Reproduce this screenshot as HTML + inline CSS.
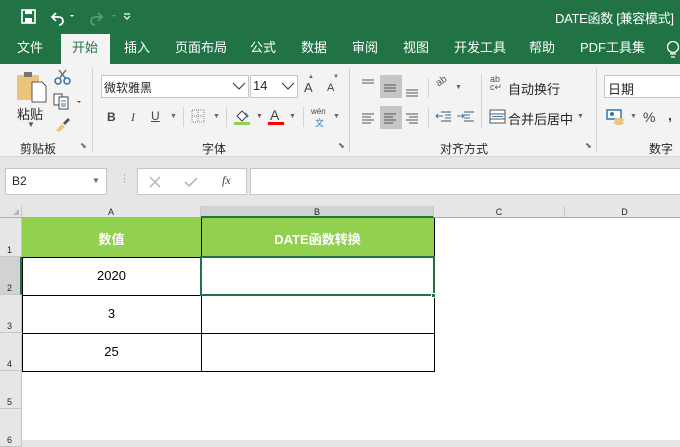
<!DOCTYPE html>
<html><head><meta charset="utf-8"><style>
*{margin:0;padding:0;box-sizing:border-box}
body{width:680px;height:440px;overflow:hidden;position:relative;background:#e6e6e6;font-family:"Liberation Sans","Noto Sans CJK SC","Microsoft YaHei",sans-serif;font-size:12px;color:#262626}
.a{position:absolute}
.t{position:absolute;white-space:nowrap}
.tab{position:absolute;top:33px;height:31px;line-height:30px;color:#fff;font-size:13px}
.sep{position:absolute;width:1px;background:#d4d4d4}
.rh{position:absolute;left:0;width:22px;background:#e6e6e6;border-bottom:1px solid #c6c6c6;border-right:1px solid #c6c6c6;font-size:9px;padding-left:7px}
.cl{position:absolute;top:206px;height:12px;background:#e6e6e6;border-right:1px solid #c6c6c6;border-bottom:1px solid #ababab;font-size:9px;text-align:center;line-height:12px}
.cell{position:absolute;text-align:center;font-size:13px;color:#000}
</style></head><body>
<div class="a" style="left:0;top:0;width:680px;height:64px;background:#217346"></div>
<svg class="a" style="left:20px;top:8px" width="120" height="18" viewBox="0 0 120 18">
<rect x="2" y="2" width="13" height="13" fill="none" stroke="#fff" stroke-width="1.6"/><rect x="5" y="2" width="7" height="4" fill="#fff"/><rect x="5" y="10" width="7" height="5" fill="#fff"/>
<path d="M36 5 l-4 4 4 4 M32 9 h7 a4 4 0 0 1 0 8" fill="none" stroke="#fff" stroke-width="1.8"/>
<path d="M50 7 l2 2 2-2z" fill="#fff"/>
<path d="M78 5 l4 4 -4 4 M82 9 h-7 a4 4 0 0 0 0 8" fill="none" stroke="#5d9c78" stroke-width="1.8"/>
<path d="M92 7 l2 2 2-2z" fill="#5d9c78"/>
<path d="M104 6 h6 M104 8 l3 3 3-3" fill="none" stroke="#fff" stroke-width="1.2"/>
</svg>
<div class="t" style="left:555px;top:8px;color:#fff;font-size:13px;letter-spacing:-0.3px">DATE函数&nbsp;[兼容模式]</div>
<div class="a" style="left:61px;top:34px;width:49px;height:31px;background:#f3f3f3"></div>
<div class="tab" style="left:17px">文件</div>
<div class="tab" style="left:72px;color:#217346">开始</div>
<div class="tab" style="left:124px">插入</div>
<div class="tab" style="left:175px">页面布局</div>
<div class="tab" style="left:250px">公式</div>
<div class="tab" style="left:301px">数据</div>
<div class="tab" style="left:352px">审阅</div>
<div class="tab" style="left:403px">视图</div>
<div class="tab" style="left:454px">开发工具</div>
<div class="tab" style="left:529px">帮助</div>
<div class="tab" style="left:580px">PDF工具集</div>
<svg class="a" style="left:665px;top:40px" width="15" height="20"><circle cx="8" cy="7" r="5.5" fill="none" stroke="#fff" stroke-width="1.3"/><path d="M5 14h6M6 17h4" stroke="#fff" stroke-width="1.3"/></svg>
<div class="a" style="left:0;top:64px;width:680px;height:93px;background:#f3f3f3;border-bottom:1px solid #d5d5d5"></div>
<svg class="a" style="left:16px;top:70px" width="32" height="34"><rect x="1" y="5" width="22" height="25" fill="#ecc47a"/><rect x="8" y="2" width="8" height="5" fill="#777"/><path d="M16 12 h10 l4 4 v16 h-14z" fill="#fff" stroke="#555"/></svg>
<div class="t" style="left:17px;top:104px;font-size:13px">粘贴</div>
<div class="t" style="left:27px;top:120px;font-size:8px;color:#555">▼</div>
<svg class="a" style="left:53px;top:68px" width="20" height="18"><circle cx="5" cy="13" r="3" fill="none" stroke="#2e75b6" stroke-width="1.5"/><circle cx="14" cy="13" r="3" fill="none" stroke="#2e75b6" stroke-width="1.5"/><path d="M6 2l7 9M13 2l-7 9" stroke="#666" stroke-width="1.4"/></svg>
<svg class="a" style="left:53px;top:93px" width="30" height="17"><rect x="1" y="1" width="8" height="11" fill="#fff" stroke="#444"/><rect x="6" y="4" width="9" height="12" fill="#fff" stroke="#444"/><path d="M8 8h5M8 11h5M8 13h5" stroke="#2e75b6"/><path d="M24 8l2 2 2-2z" fill="#555"/></svg>
<svg class="a" style="left:53px;top:115px" width="18" height="18"><path d="M3 15 l6-6 3 3 -6 5z" fill="#ecc47a"/><path d="M10 8 l5-5 2 2 -5 5z" fill="#555"/></svg>
<div class="t" style="left:20px;top:140px">剪贴板</div>
<div class="t" style="left:80px;top:141px;font-size:8px;color:#666">⬊</div>
<div class="sep" style="left:92px;top:68px;height:85px"></div>
<div class="a" style="left:101px;top:75px;width:148px;height:23px;background:#fff;border:1px solid #c6c6c6"></div>
<div class="t" style="left:104px;top:79px;font-size:12px">微软雅黑</div>
<svg class="a" style="left:232px;top:82px" width="14" height="9"><path d="M1 1l6 6 6-6" fill="none" stroke="#444" stroke-width="1.2"/></svg>
<div class="a" style="left:250px;top:75px;width:48px;height:23px;background:#fff;border:1px solid #c6c6c6"></div>
<div class="t" style="left:253px;top:78px;font-size:13px">14</div>
<svg class="a" style="left:281px;top:82px" width="14" height="9"><path d="M1 1l6 6 6-6" fill="none" stroke="#444" stroke-width="1.2"/></svg>
<div class="t" style="left:304px;top:80px;font-size:13px;color:#444">A</div><div class="t" style="left:308px;top:74px;font-size:6px;color:#2e75b6">▲</div>
<div class="t" style="left:327px;top:82px;font-size:11px;color:#444">A</div><div class="t" style="left:333px;top:74px;font-size:6px;color:#2e75b6">▼</div>
<div class="t" style="left:107px;top:110px;font-weight:bold;font-size:12px;color:#444">B</div>
<div class="t" style="left:131px;top:110px;font-style:italic;font-size:12px;color:#444;font-family:'Liberation Serif',serif">I</div>
<div class="t" style="left:151px;top:109px;text-decoration:underline;font-size:12px;color:#444">U</div>
<div class="t" style="left:170px;top:113px;font-size:7px;color:#666">▼</div>
<div class="sep" style="left:183px;top:107px;height:20px"></div>
<svg class="a" style="left:191px;top:109px" width="14" height="14"><rect x="1" y="1" width="12" height="12" fill="none" stroke="#888" stroke-dasharray="1 1"/><path d="M7 1v12M1 7h12" stroke="#888" stroke-dasharray="1 1"/></svg>
<div class="t" style="left:213px;top:113px;font-size:7px;color:#666">▼</div>
<div class="sep" style="left:226px;top:107px;height:20px"></div>
<svg class="a" style="left:233px;top:108px" width="18" height="18"><path d="M4 8l5-5 5 5-5 5z" fill="#fff" stroke="#444"/><path d="M12 5 l3 4" stroke="#2e75b6" stroke-width="2"/><rect x="1" y="14" width="16" height="3" fill="#92d050"/></svg>
<div class="t" style="left:256px;top:113px;font-size:7px;color:#666">▼</div>
<div class="t" style="left:270px;top:107px;font-size:14px;color:#444">A</div>
<div class="a" style="left:268px;top:122px;width:16px;height:3px;background:#f00"></div>
<div class="t" style="left:289px;top:113px;font-size:7px;color:#666">▼</div>
<div class="sep" style="left:303px;top:107px;height:20px"></div>
<div class="t" style="left:311px;top:107px;font-size:8px;color:#444">wén</div>
<div class="t" style="left:315px;top:116px;font-size:9px;color:#2e75b6">文</div>
<div class="t" style="left:333px;top:113px;font-size:7px;color:#666">▼</div>
<div class="t" style="left:202px;top:140px">字体</div>
<div class="t" style="left:338px;top:141px;font-size:8px;color:#666">⬊</div>
<div class="sep" style="left:349px;top:68px;height:85px"></div>
<div class="a" style="left:380px;top:75px;width:22px;height:23px;background:#c6c6c6"></div>
<div class="a" style="left:380px;top:106px;width:22px;height:23px;background:#c6c6c6"></div>
<svg class="a" style="left:360px;top:76px" width="80" height="54" stroke="#555" stroke-width="1">
<path d="M2 4h12M2 7h12M24 9h12M24 12h12M24 15h12M46 14h12M46 17h12M46 20h12"/>
<path d="M2 38h12M2 41h9M2 44h12M2 47h9M24 38h12M24 41h9M24 44h12M24 47h9M46 38h12M49 41h9M46 44h12M49 47h9"/>
</svg>
<div class="sep" style="left:428px;top:78px;height:20px"></div>
<div class="sep" style="left:428px;top:108px;height:20px"></div>
<div class="t" style="left:436px;top:76px;font-size:10px;color:#555;transform:rotate(-35deg)">ab</div>
<div class="t" style="left:455px;top:84px;font-size:7px;color:#666">▼</div>
<svg class="a" style="left:435px;top:109px" width="44" height="14"><path d="M6 3h10M10 6h6M10 9h6M6 12h10M1 7h7M3 5l-2 2 2 2" fill="none" stroke="#2e75b6"/><path d="M29 3h10M29 6h6M29 9h6M29 12h10M22 7h7M27 5l2 2-2 2" fill="none" stroke="#2e75b6"/><path d="M6 3h10M6 12h10M29 3h10M29 12h10" stroke="#555"/></svg>
<div class="sep" style="left:481px;top:74px;height:55px"></div>
<div class="t" style="left:490px;top:75px;font-size:9px;color:#555;line-height:8px">ab<br>c↵</div>
<div class="t" style="left:508px;top:79px;font-size:13px">自动换行</div>
<svg class="a" style="left:489px;top:109px" width="17" height="15"><rect x="1" y="1" width="15" height="13" fill="#fff" stroke="#555"/><path d="M1 5h15M1 10h15" stroke="#555"/><path d="M3 7.5h11" stroke="#2e75b6"/></svg>
<div class="t" style="left:508px;top:109px;font-size:13px">合并后居中</div>
<div class="t" style="left:577px;top:113px;font-size:7px;color:#666">▼</div>
<div class="t" style="left:440px;top:140px">对齐方式</div>
<div class="t" style="left:585px;top:141px;font-size:8px;color:#666">⬊</div>
<div class="sep" style="left:596px;top:68px;height:85px"></div>
<div class="a" style="left:604px;top:75px;width:80px;height:23px;background:#fff;border:1px solid #c6c6c6"></div>
<div class="t" style="left:608px;top:79px;font-size:13px">日期</div>
<svg class="a" style="left:606px;top:108px" width="20" height="18"><rect x="1" y="2" width="14" height="9" fill="#fff" stroke="#2e75b6" stroke-width="1.5"/><circle cx="6" cy="6" r="2" fill="#2e75b6"/><ellipse cx="13" cy="12" rx="5" ry="2" fill="#ecc47a"/><ellipse cx="13" cy="15" rx="5" ry="2" fill="#ecc47a"/></svg>
<div class="t" style="left:630px;top:113px;font-size:7px;color:#666">▼</div>
<div class="t" style="left:643px;top:109px;font-size:14px;color:#444">%</div>
<div class="t" style="left:668px;top:107px;font-size:14px;color:#444;font-weight:bold">,</div>
<div class="t" style="left:649px;top:140px">数字</div>
<div class="a" style="left:5px;top:168px;width:102px;height:27px;background:#fff;border:1px solid #c6c6c6"></div>
<div class="t" style="left:12px;top:174px;font-size:12px">B2</div>
<div class="t" style="left:92px;top:176px;font-size:8px;color:#666">▼</div>
<div class="t" style="left:119px;top:172px;font-size:11px;color:#aaa">⋮</div>
<div class="a" style="left:137px;top:168px;width:110px;height:27px;background:#fff;border:1px solid #c6c6c6"></div>
<svg class="a" style="left:148px;top:175px" width="90" height="14"><path d="M2 2l10 10M12 2l-10 10" stroke="#b0b0b0" stroke-width="1.3"/><path d="M37 7l4 4 8-8" fill="none" stroke="#b0b0b0" stroke-width="1.5"/></svg>
<div class="t" style="left:222px;top:173px;font-size:12px;font-style:italic;font-family:'Liberation Serif',serif;color:#444">fx</div>
<div class="a" style="left:250px;top:168px;width:440px;height:27px;background:#fff;border:1px solid #c6c6c6"></div>
<div class="a" style="left:0;top:218px;width:680px;height:222px;background:#fff"></div>
<div class="a" style="left:0;top:206px;width:22px;height:12px;background:#e6e6e6;border-right:1px solid #c6c6c6;border-bottom:1px solid #ababab"></div>
<svg class="a" style="left:12px;top:208px" width="8" height="8"><path d="M7 1v6h-6z" fill="#b5b5b5"/></svg>
<div class="cl" style="left:22px;width:179px">A</div>
<div class="cl" style="left:201px;width:233px;background:#d2d2d2;border-bottom:2px solid #217346">B</div>
<div class="cl" style="left:434px;width:131px">C</div>
<div class="cl" style="left:565px;width:120px">D</div>
<div class="rh" style="top:218px;height:39px;padding-top:27px">1</div>
<div class="rh" style="top:257px;height:38px;padding-top:26px;background:#d2d2d2;border-right:2px solid #217346">2</div>
<div class="rh" style="top:295px;height:38px;padding-top:26px">3</div>
<div class="rh" style="top:333px;height:38px;padding-top:26px">4</div>
<div class="rh" style="top:371px;height:38px;padding-top:26px">5</div>
<div class="rh" style="top:409px;height:38px;padding-top:26px">6</div>
<div class="a" style="left:22px;top:218px;width:412px;height:39px;background:#92d050"></div>
<div class="cell" style="left:22px;top:229px;width:179px;color:#fff;font-weight:bold">数值</div>
<div class="cell" style="left:201px;top:229px;width:233px;color:#fff;font-weight:bold">DATE函数转换</div>
<div class="a" style="left:22px;top:218px;width:413px;height:154px;border-right:1px solid #000;border-bottom:1px solid #000"></div>
<div class="a" style="left:201px;top:218px;width:1px;height:154px;background:#000"></div>
<div class="a" style="left:22px;top:257px;width:413px;height:1px;background:#000"></div>
<div class="a" style="left:22px;top:295px;width:413px;height:1px;background:#000"></div>
<div class="a" style="left:22px;top:333px;width:413px;height:1px;background:#000"></div>
<div class="a" style="left:22px;top:257px;width:1px;height:115px;background:#000"></div>
<div class="cell" style="left:22px;top:268px;width:179px">2020</div>
<div class="cell" style="left:22px;top:306px;width:179px">3</div>
<div class="cell" style="left:22px;top:344px;width:179px">25</div>
<div class="a" style="left:200px;top:256px;width:235px;height:40px;border:2px solid #217346"></div>
<div class="a" style="left:431px;top:293px;width:5px;height:5px;background:#217346;border:1px solid #fff"></div>
</body></html>
